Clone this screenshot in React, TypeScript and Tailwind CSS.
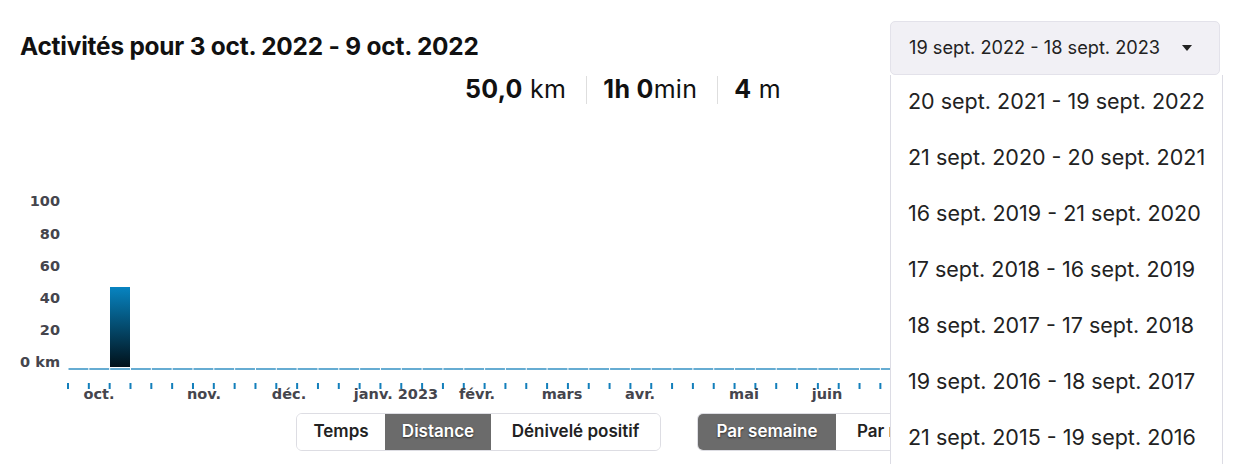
import React from 'react';

const font = { fontFamily: 'Inter, "Noto Sans", sans-serif' };
const axisFont = { fontFamily: '"DejaVu Sans", Inter, sans-serif' };

const yLabels = [
  { label: '100', y: 11 },
  { label: '80', y: 44 },
  { label: '60', y: 76 },
  { label: '40', y: 108 },
  { label: '20', y: 140 },
  { label: '0 km', y: 172 },
];

const months = [
  { label: 'oct.', x: 99 },
  { label: 'nov.', x: 204 },
  { label: 'déc.', x: 289 },
  { label: 'janv. 2023', x: 396 },
  { label: 'févr.', x: 477 },
  { label: 'mars', x: 562 },
  { label: 'avr.', x: 640 },
  { label: 'mai', x: 744 },
  { label: 'juin', x: 827 },
];

const periods = [
  '20 sept. 2021 - 19 sept. 2022',
  '21 sept. 2020 - 20 sept. 2021',
  '16 sept. 2019 - 21 sept. 2020',
  '17 sept. 2018 - 16 sept. 2019',
  '18 sept. 2017 - 17 sept. 2018',
  '19 sept. 2016 - 18 sept. 2017',
  '21 sept. 2015 - 19 sept. 2016',
];

const WEEK = 20.83;
const X0 = 68;

const Chart = () => {
  const weeks = Array.from({ length: 52 }, (_, i) => i);
  return (
    <svg width={1246} height={223} className="block">
      <defs>
        <linearGradient id="barGrad" x1="0" y1="0" x2="0" y2="1">
          <stop offset="0%" stopColor="#0784c1" />
          <stop offset="100%" stopColor="#01111a" />
        </linearGradient>
      </defs>
      {yLabels.map((l) => (
        <text
          key={l.label}
          x={60}
          y={l.y}
          textAnchor="end"
          dominantBaseline="central"
          fontSize={14.5}
          fontWeight={700}
          fill="#45454d"
          style={axisFont}
        >
          {l.label}
        </text>
      ))}
      {weeks.map((i) => (
        <line
          key={'b' + i}
          x1={X0 + i * WEEK + 0.5}
          x2={X0 + (i + 1) * WEEK - 0.5}
          y1={179}
          y2={179}
          stroke="#137fba"
          strokeWidth={1.3}
        />
      ))}
      {Array.from({ length: 53 }, (_, i) => (
        <rect key={'t' + i} x={X0 + i * WEEK - 1} y={193} width={2} height={6} fill="#137fbb" />
      ))}
      <rect x={110} y={97} width={20} height={80} fill="url(#barGrad)" />
      {months.map((m) => (
        <text
          key={m.label}
          x={m.x}
          y={204}
          textAnchor="middle"
          dominantBaseline="central"
          fontSize={14.5}
          fontWeight={700}
          fill="#45454d"
          style={axisFont}
        >
          {m.label}
        </text>
      ))}
    </svg>
  );
};

const Segmented = ({ items }: { items: { label: string; w: string; active?: boolean }[] }) => (
  <div className="flex h-[38px] rounded-[6px] border border-[#dddde3] overflow-hidden">
    {items.map((it) => (
      <div
        key={it.label}
        className={`${it.w} flex items-center justify-center text-[17px] font-semibold whitespace-nowrap ${
          it.active ? 'bg-[#6b6b6b] text-white [text-shadow:0_1px_2px_rgba(0,0,0,0.6)]' : 'bg-white text-[#222]'
        }`}
      >
        {it.label}
      </div>
    ))}
  </div>
);

export default function App() {
  return (
    <div className="relative w-[1246px] h-[464px] overflow-hidden bg-white text-[#1a1a1a]" style={font}>
      {/* header */}
      <div className="flex justify-between items-start pl-5 pr-[26px] pt-[21px]">
        <h2 className="text-[24.4px] font-bold tracking-[-0.2px] mt-[7px] text-[#111]">
          Activités pour 3 oct. 2022 - 9 oct. 2022
        </h2>
        <div className="relative z-10 w-[330px]">
          <div className="h-[54px] flex items-center justify-between pl-[18px] pr-[27px] bg-[#f1f0f5] border border-[#e3e2ea] rounded-[5px] text-[18.2px] text-[#222]">
            <span>19 sept. 2022 - 18 sept. 2023</span>
            <svg width="10" height="6" viewBox="0 0 10 6">
              <path d="M0 0 L10 0 L5 6 Z" fill="#222" />
            </svg>
          </div>
          <div className="absolute left-0 top-full w-[333px] bg-white border-x border-[#dcdce4]">
            {periods.map((p) => (
              <div key={p} className="h-[56px] flex items-center pl-[17px] pb-[4px] text-[21.5px] text-[#222] whitespace-nowrap">
                {p}
              </div>
            ))}
          </div>
        </div>
      </div>

      {/* stats */}
      <div className="flex justify-center items-center h-[30px] text-[25px] tracking-[0.3px] text-[#111]">
        <div className="pr-[20px]">
          <span className="font-bold">50,0</span> km
        </div>
        <div className="border-l border-[#dedede] h-[28px] flex items-center pl-[16px] pr-[20px]">
          <span className="font-bold">1h 0</span>min
        </div>
        <div className="border-l border-[#dedede] h-[28px] flex items-center pl-[16px]">
          <span className="font-bold">4</span>&nbsp;m
        </div>
      </div>

      {/* chart */}
      <div className="mt-[85px]">
        <Chart />
      </div>

      {/* controls */}
      <div className="flex justify-center gap-9">
        <Segmented
          items={[
            { label: 'Temps', w: 'w-[88px]' },
            { label: 'Distance', w: 'w-[106px]', active: true },
            { label: 'Dénivelé positif', w: 'w-[169px]' },
          ]}
        />
        <Segmented
          items={[
            { label: 'Par semaine', w: 'w-[138px]', active: true },
            { label: 'Par mois', w: 'w-[113px]' },
          ]}
        />
      </div>
    </div>
  );
}
